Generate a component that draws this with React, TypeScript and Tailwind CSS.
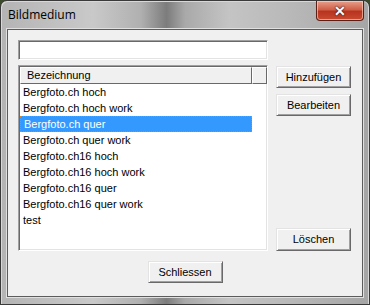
import React from 'react'

const ROWS = [
  'Bergfoto.ch hoch',
  'Bergfoto.ch hoch work',
  'Bergfoto.ch quer',
  'Bergfoto.ch quer work',
  'Bergfoto.ch16 hoch',
  'Bergfoto.ch16 hoch work',
  'Bergfoto.ch16 quer',
  'Bergfoto.ch16 quer work',
  'test',
]

const SELECTED = 2

function WinButton({ label, className = '' }: { label: string; className?: string }) {
  return (
    <button
      className={`flex w-[75px] items-center justify-center border border-t-[#e3e3e3] border-l-[#e3e3e3] border-b-[#696969] border-r-[#696969] bg-[#f0f0f0] text-[11px] text-black shadow-[inset_1px_1px_0_#ffffff,inset_-1px_-1px_0_#a0a0a0] ${className}`}
    >
      {label}
    </button>
  )
}

export default function App() {
  return (
    <div className="h-[305px] w-[370px] overflow-hidden bg-[#3c4a2c] font-['Liberation_Sans',Arial,sans-serif]">
      <div className="flex h-[305px] w-[370px] flex-col rounded-t-[7px] border border-[#3a3a3a] bg-[linear-gradient(90deg,#b4b4b4_0%,#c9c9c9_25%,#b0b0b0_38%,#7c7c7c_45%,#a9a9a9_50%,#c4c4c4_62%,#b9b9b9_78%,#a5a5a5_100%)] shadow-[inset_1px_1px_0_#d8d8d8,inset_-1px_0_0_#d8d8d8]">
        {/* Title bar */}
        <div className="flex h-[28px] shrink-0 items-start justify-between pl-[7px] pr-[5px]">
          <span className="mt-[7px] font-['Open_Sans',sans-serif] text-[12px] leading-[14px] text-black">
            Bildmedium
          </span>
          <div className="flex h-[20px] w-[48px] items-center justify-center rounded-b-[4px] border border-t-0 border-[#5a2018] bg-[linear-gradient(180deg,#e8a08c_0%,#d06048_45%,#b83420_55%,#c84a30_100%)] shadow-[inset_0_0_0_1px_rgba(255,220,200,0.6)]">
            <span className="text-[14px] font-bold leading-none text-white [text-shadow:0_0_2px_#3a1008,0_0_1px_#3a1008]">
              ✕
            </span>
          </div>
        </div>

        {/* Client area */}
        <div className="mx-[6px] mb-[7px] flex flex-1 flex-col border border-[#5c5c5c] bg-[#f0f0f0] shadow-[0_0_0_1px_#e0e0e0]">
          <div className="flex gap-[8px] pl-[10px] pt-[10px]">
            <div className="flex w-[250px] flex-col gap-[5px]">
              <div className="h-[20px] border border-t-[#a0a0a0] border-l-[#a0a0a0] border-b-white border-r-white bg-white shadow-[inset_1px_1px_0_#696969,inset_-1px_-1px_0_#e3e3e3]" />
              <div className="flex h-[186px] flex-col border border-t-[#a0a0a0] border-l-[#a0a0a0] border-b-white border-r-white bg-white shadow-[inset_1px_1px_0_#696969,inset_-1px_-1px_0_#e3e3e3]">
                <div className="ml-px mt-px flex h-[17px] shrink-0">
                  <div className="flex w-[232px] items-center border border-t-white border-l-white border-b-[#696969] border-r-[#696969] bg-[#f0f0f0] pl-[6px] text-[11px] text-black">
                    Bezeichnung
                  </div>
                  <div className="flex-1 border border-t-white border-l-white border-b-[#696969] border-r-[#696969] bg-[#f0f0f0]" />
                </div>
                <div className="flex flex-col pl-[1px]">
                  {ROWS.map((r, i) => (
                    <div
                      key={r}
                      className={`flex h-[16px] w-[232px] items-center pl-[3px] text-[11px] ${
                        i === SELECTED
                          ? 'border border-dotted border-[#e08020] bg-[#3399ff] pl-[2px] text-white'
                          : 'text-black'
                      }`}
                    >
                      {r}
                    </div>
                  ))}
                </div>
              </div>
            </div>
            <div className="flex flex-col pt-[26px]">
              <WinButton label="Hinzufügen" className="h-[22px]" />
              <WinButton label="Bearbeiten" className="mt-[6px] h-[22px]" />
              <WinButton label="Löschen" className="mt-[112px] h-[23px]" />
            </div>
          </div>
          <div className="flex justify-center pt-[10px]">
            <WinButton label="Schliessen" className="h-[22px]" />
          </div>
        </div>
      </div>
    </div>
  )
}
